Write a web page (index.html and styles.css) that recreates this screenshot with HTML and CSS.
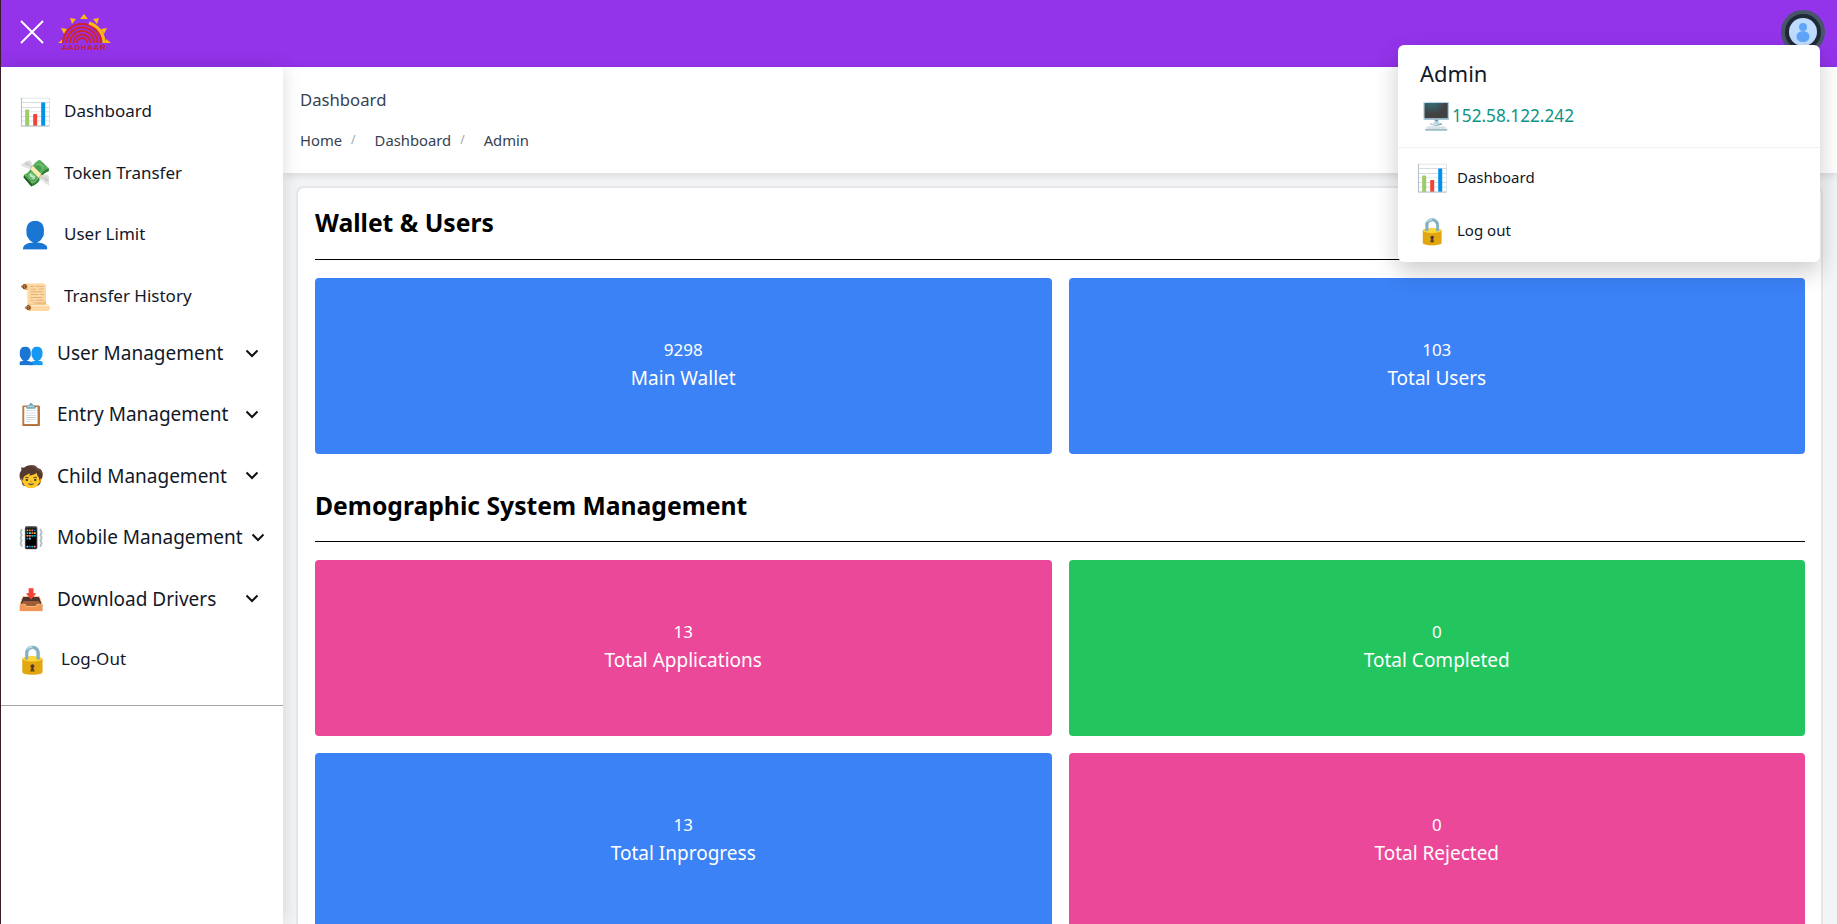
FILE: index.html
```html
<!DOCTYPE html>
<html lang="en">
<head>
<meta charset="utf-8">
<title>Dashboard</title>
<link rel="stylesheet" href="styles.css">
</head>
<body>
<div class="app">
  <header class="topbar">
    <div class="topbar-left">
      <svg class="close" viewBox="0 0 24 24" width="24" height="24"><path d="M1 1L23 23M23 1L1 23" stroke="#fff" stroke-width="2" fill="none"/></svg>
      <svg class="logo" viewBox="0 0 54 38" width="54" height="38">
        <g fill="#fdb913"><path d="M26 0l4 5h-8z"/><path d="M12 4l6 1-4 5z"/><path d="M41 4l-6 1 4 5z"/><path d="M3 14l6 1-3 5z"/><path d="M49 14l-6 1 3 5z"/><path d="M0 29l5-4 1 4z"/><path d="M53 29l-5-4-1 4z"/></g>
        <g fill="none" stroke="#d3222a" stroke-width="2"><path d="M5 29a19 19 0 0 1 38 0"/><path d="M8.5 29a15.5 15.5 0 0 1 31 0"/><path d="M12 29a12 12 0 0 1 24 0"/><path d="M15.5 29a8.500 8.500 0 0 1 17 0"/><path d="M19 29a5 5 0 0 1 10 0"/></g>
        <path d="M46 29a21 21 0 0 0-15-20" fill="none" stroke="#fdb913" stroke-width="3"/>
        <text x="26" y="36" class="logo-text" text-anchor="middle">AADHAAR</text>
      </svg>
    </div>
    <div class="avatar"><svg viewBox="0 0 28 28" width="28" height="28"><circle cx="14" cy="14" r="14" fill="#bfdbfe"/><circle cx="14" cy="9" r="4" fill="#60a5fa"/><ellipse cx="14" cy="18.5" rx="6.5" ry="5.5" fill="#60a5fa"/></svg></div>
  </header>
  <div class="body">
    <aside class="sidebar">
      <nav class="nav">
        <a class="link"><span class="emoji">📊</span><span>Dashboard</span></a>
        <a class="link"><span class="emoji">💸</span><span>Token Transfer</span></a>
        <a class="link"><span class="emoji">👤</span><span>User Limit</span></a>
        <a class="link"><span class="emoji">📜</span><span>Transfer History</span></a>
        <a class="group"><span class="emoji-s">👥</span><span class="grow">User Management</span><svg class="chev" viewBox="0 0 14 9"><path d="M1.5 1.5L7 7l5.5-5.5"/></svg></a>
        <a class="group"><span class="emoji-s">📋</span><span class="grow">Entry Management</span><svg class="chev" viewBox="0 0 14 9"><path d="M1.5 1.5L7 7l5.5-5.5"/></svg></a>
        <a class="group"><span class="emoji-s">🧒</span><span class="grow">Child Management</span><svg class="chev" viewBox="0 0 14 9"><path d="M1.5 1.5L7 7l5.5-5.5"/></svg></a>
        <a class="group group-wide"><span class="emoji-s">📳</span><span class="grow">Mobile Management</span><svg class="chev" viewBox="0 0 14 9"><path d="M1.5 1.5L7 7l5.5-5.5"/></svg></a>
        <a class="group"><span class="emoji-s">📥</span><span class="grow">Download Drivers</span><svg class="chev" viewBox="0 0 14 9"><path d="M1.5 1.5L7 7l5.5-5.5"/></svg></a>
        <a class="logout"><span class="emoji emoji-lg">🔒</span><span>Log-Out</span></a>
      </nav>
    </aside>
    <main class="main">
      <div class="pagehead">
        <div class="pagetitle">Dashboard</div>
        <div class="crumbs"><span>Home</span><i>/</i><span>Dashboard</span><i>/</i><span>Admin</span></div>
      </div>
      <section class="card">
        <h2>Wallet &amp; Users</h2>
        <div class="grid">
          <div class="stat blue"><span class="num">9298</span><span class="lbl">Main Wallet</span></div>
          <div class="stat blue"><span class="num">103</span><span class="lbl">Total Users</span></div>
        </div>
        <h2 class="second">Demographic System Management</h2>
        <div class="grid">
          <div class="stat pink"><span class="num">13</span><span class="lbl">Total Applications</span></div>
          <div class="stat green"><span class="num">0</span><span class="lbl">Total Completed</span></div>
          <div class="stat blue"><span class="num">13</span><span class="lbl">Total Inprogress</span></div>
          <div class="stat pink"><span class="num">0</span><span class="lbl">Total Rejected</span></div>
        </div>
      </section>
    </main>
  </div>
  <div class="menu">
    <div class="menu-head">
      <div class="menu-name">Admin</div>
      <div class="menu-ip"><span class="emoji">🖥️</span><span>152.58.122.242</span></div>
    </div>
    <a class="menu-item"><span class="emoji">📊</span><span>Dashboard</span></a>
    <a class="menu-item"><span class="emoji">🔒</span><span>Log out</span></a>
  </div>
</div>
</body>
</html>
```
FILE: styles.css
```css
* { box-sizing: border-box; }
html, body { margin: 0; height: 100%; overflow: hidden; }
body { font-family: "Noto Sans", "Open Sans", "Noto Color Emoji", sans-serif; color: #111827; background: #f3f4f6; }
.app { height: 924px; overflow: hidden; display: flex; flex-direction: column; position: relative; border-left: 1px solid #3b1a2b; }
.topbar { height: 67px; flex: none; background: #9333ea; display: flex; align-items: center; justify-content: space-between; padding: 0 12px 0 19px; }
.topbar-left { display: flex; align-items: center; gap: 14px; margin-top: -3px; }
.close { display: block; }
.logo { display: block; margin-top: 2px; }
.logo-text { font: 700 8px "Liberation Sans", sans-serif; fill: #c8202c; letter-spacing: .6px; }
.avatar { width: 44px; height: 44px; border-radius: 50%; background: #1f2937; border: 4px solid #475569; display: flex; align-items: center; justify-content: center; margin-top: -3px; }
.body { flex: 1; display: flex; min-height: 0; }
.sidebar { width: 282px; flex: none; background: #fff; box-shadow: 0 0 18px rgba(0,0,0,.14); position: relative; z-index: 2; }
.nav { height: 639px; border-bottom: 1px solid #a3a3a8; padding-top: 13px; display: flex; flex-direction: column; }
.link { height: 61.6px; flex: none; display: flex; align-items: center; padding-left: 18px; gap: 13px; font-size: 17px; }
.emoji { font-size: 26px; line-height: 1; width: 32px; text-align: center; flex: none; }
.emoji-lg { font-size: 28px; }
.group { height: 61.4px; flex: none; display: flex; align-items: center; padding-left: 17px; padding-right: 24px; font-size: 19px; }
.link + .group { margin-top: -4px; }
.group-wide { padding-right: 18px; }
.emoji-s { font-size: 21px; width: 39px; flex: none; }
.grow { flex: 1; white-space: nowrap; }
.chev { width: 14px; height: 9px; flex: none; fill: none; stroke: #111; stroke-width: 2; }
.logout { height: 58px; flex: none; display: flex; align-items: center; padding-left: 14px; gap: 14px; font-size: 17px; }
.main { flex: 1; min-width: 0; background: #f3f4f6; }
.pagehead { height: 106px; background: #fff; padding: 21px 17px 0; box-shadow: 0 2px 8px rgba(0,0,0,.12); color: #374151; position: relative; }
.pagetitle { font-size: 16.7px; line-height: 24px; }
.crumbs { margin-top: 16px; font-size: 14.8px; display: flex; gap: 9px; line-height: 24px; }
.crumbs i { font-style: normal; color: #9ca3af; font-size: 12px; margin-right: 10px; }
.card { margin: 13px 14px 0 13px; background: #fff; border: 2px solid #e5e7eb; border-radius: 8px; padding: 17px 16px 0 17px; height: 800px; }
h2 { margin: 0; font-size: 24.7px; line-height: 36px; padding-bottom: 18px; border-bottom: 1px solid #000; color: #000; font-weight: 700; }
.second { margin-top: 34px; padding-bottom: 17px; }
.grid { display: grid; grid-template-columns: 1fr 1fr; gap: 17px; margin-top: 18px; }
.stat { height: 176px; border-radius: 4px; color: #fff; display: flex; flex-direction: column; align-items: center; justify-content: center; text-align: center; padding-bottom: 4px; }
.num { font-size: 17px; line-height: 28px; }
.lbl { font-size: 19px; line-height: 28px; }
.blue { background: #3b82f6; }
.pink { background: #ec4899; }
.green { background: #22c55e; }
.menu { position: absolute; left: 1397px; top: 45px; width: 422px; height: 217px; background: #fff; border-radius: 6px; box-shadow: 0 10px 25px rgba(0,0,0,.2); z-index: 5; }
.menu-head { height: 103px; border-bottom: 1px solid #f0f0f2; padding: 13px 22px 0; }
.menu-name { font-size: 22px; line-height: 30px; }
.menu-ip { display: flex; align-items: center; font-size: 17.2px; color: #0d9488; margin-top: 14px; }
.menu-item { height: 53px; display: flex; align-items: center; padding: 5px 0 0 18px; gap: 9px; font-size: 15px; }
```
